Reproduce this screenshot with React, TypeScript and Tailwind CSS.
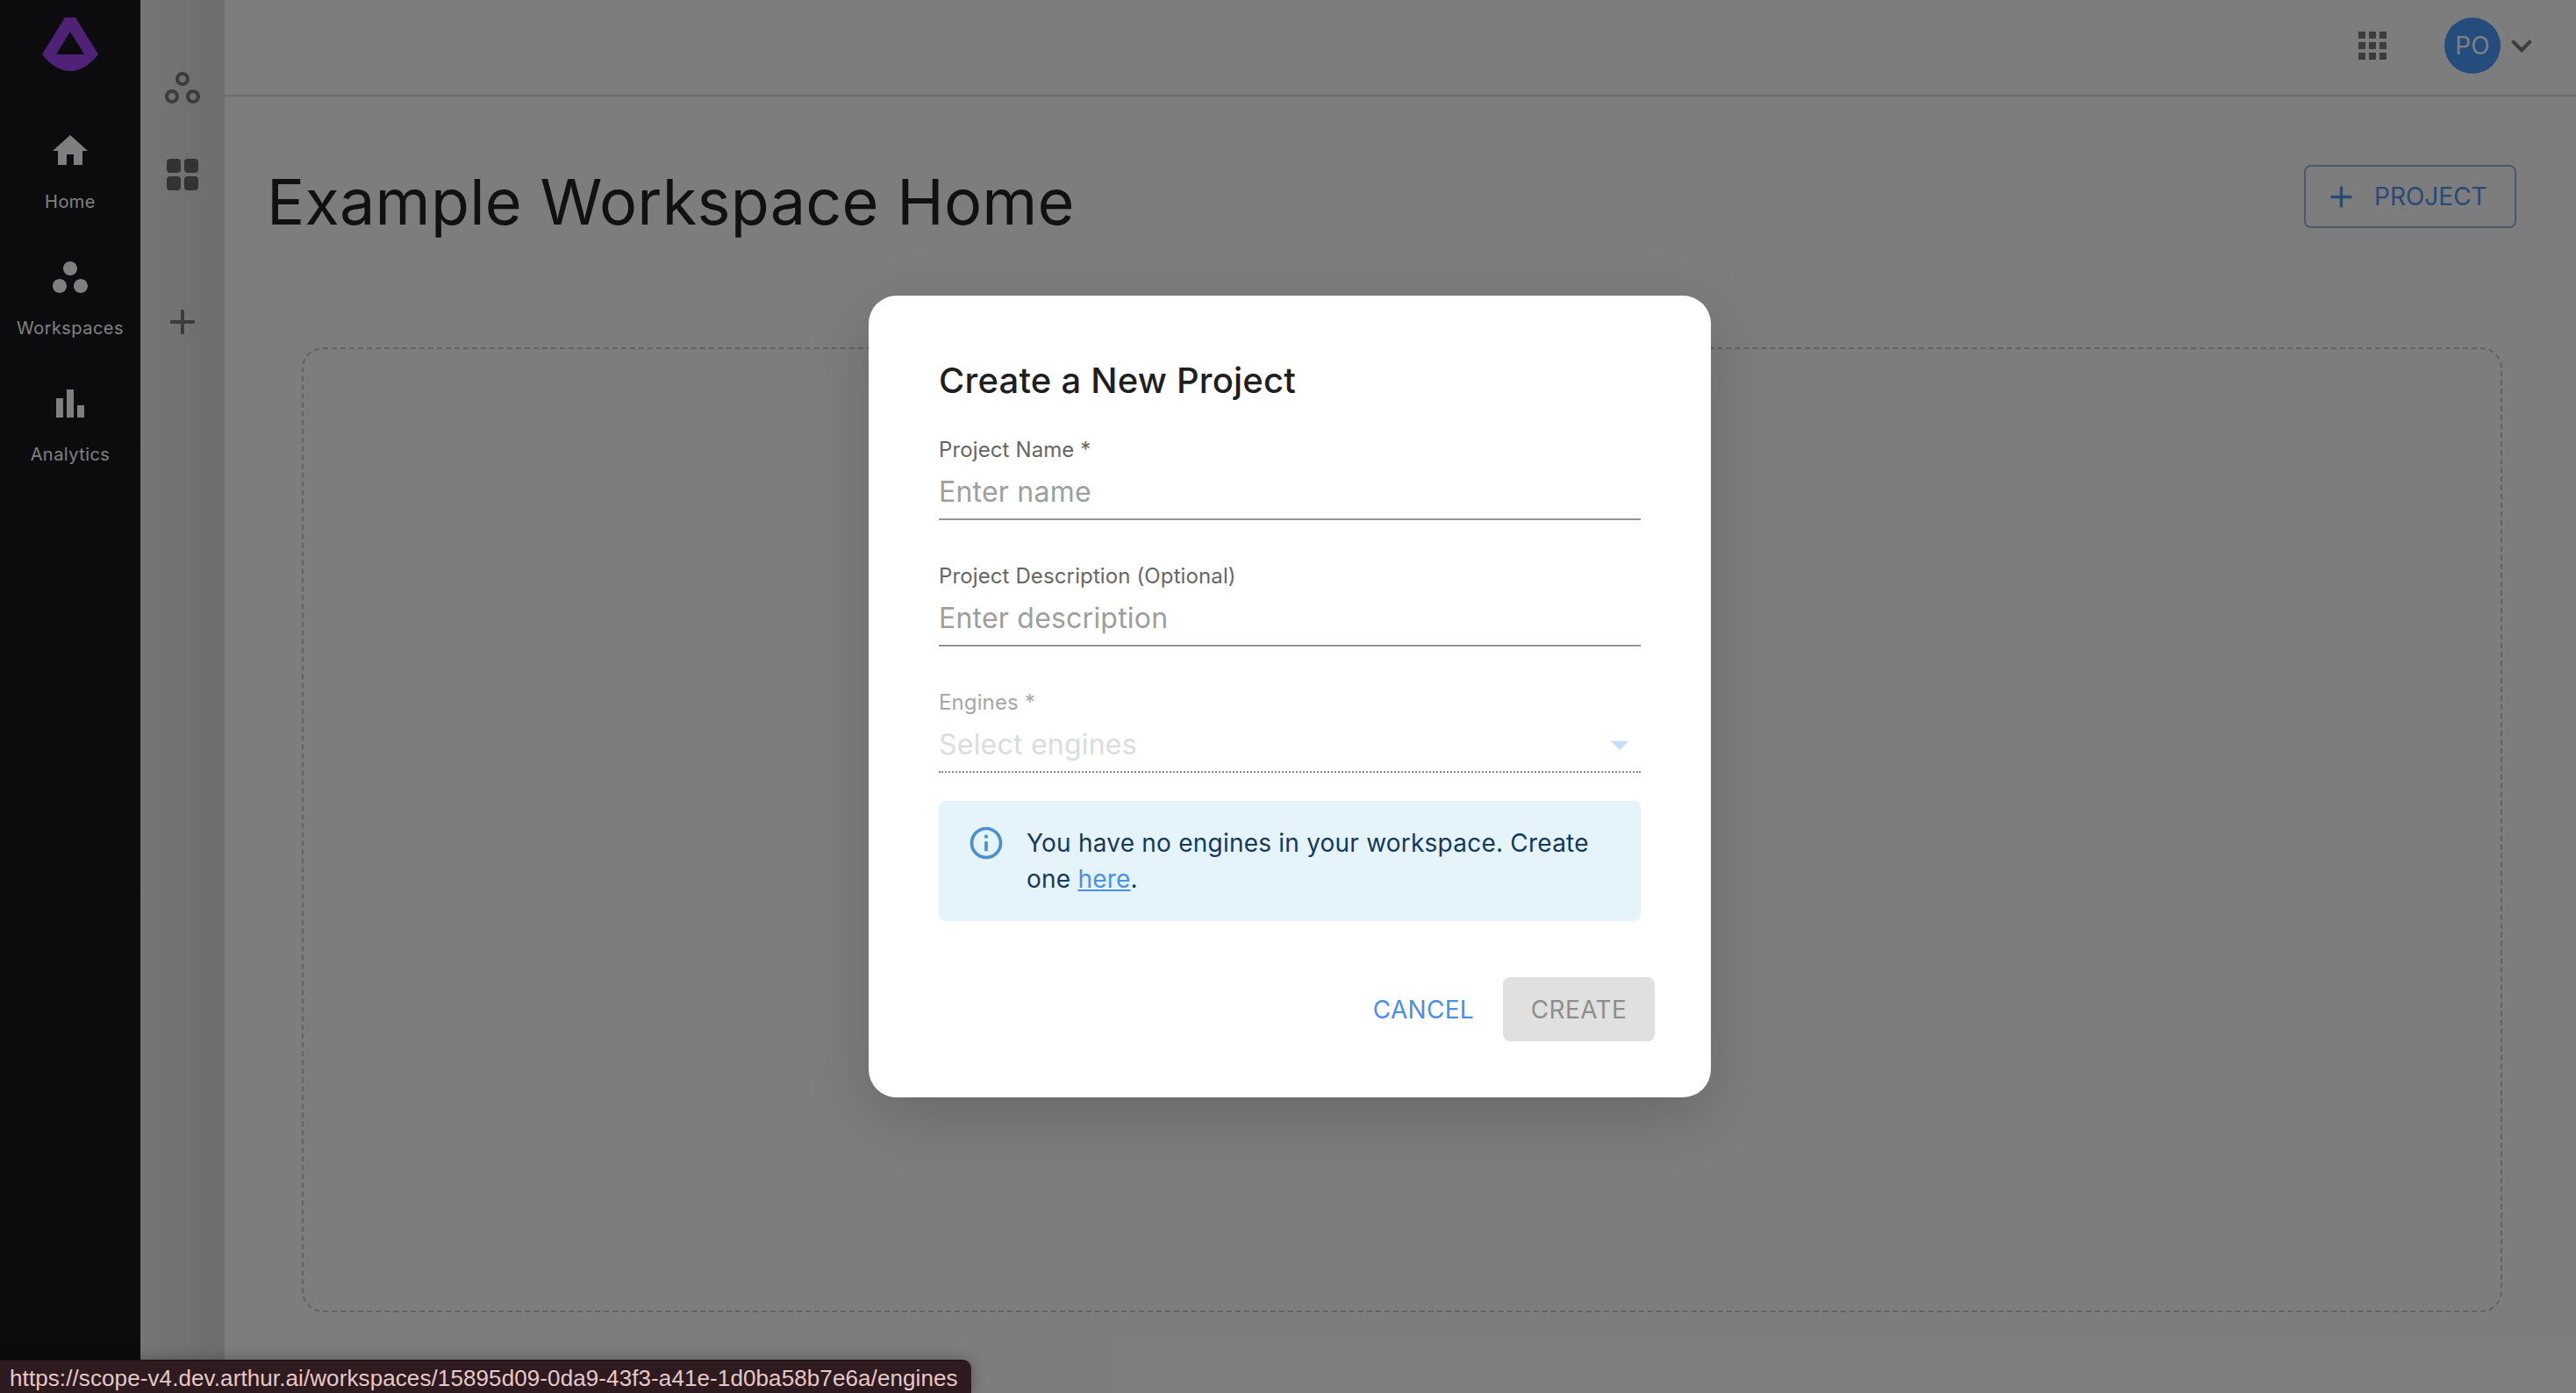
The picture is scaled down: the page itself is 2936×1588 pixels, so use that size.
import React from "react";

const Ico = ({ d, size = 48, className = "" }: { d: string; size?: number; className?: string }) => (
  <svg width={size} height={size} viewBox="0 0 24 24" className={"block shrink-0 fill-current " + className}>
    <path d={d} />
  </svg>
);

const HOME = "M10 20v-6h4v6h5v-8h3L12 3 2 12h3v8z";
const WORK = "M6 13c-2.2 0-4 1.8-4 4s1.8 4 4 4 4-1.8 4-4-1.8-4-4-4zm6-10C9.8 3 8 4.8 8 7s1.8 4 4 4 4-1.8 4-4-1.8-4-4-4zm6 10c-2.2 0-4 1.8-4 4s1.8 4 4 4 4-1.8 4-4-1.8-4-4-4z";
const BARS = "M4 9h4v11H4zm12 4h4v7h-4zm-6-9h4v16h-4z";
const WORK_O = "M6 15c1.1 0 2 .9 2 2s-.9 2-2 2-2-.9-2-2 .9-2 2-2m0-2c-2.2 0-4 1.8-4 4s1.8 4 4 4 4-1.8 4-4-1.8-4-4-4zm6-8c1.1 0 2 .9 2 2s-.9 2-2 2-2-.9-2-2 .9-2 2-2m0-2C9.8 3 8 4.8 8 7s1.8 4 4 4 4-1.8 4-4-1.8-4-4-4zm6 12c1.1 0 2 .9 2 2s-.9 2-2 2-2-.9-2-2 .9-2 2-2m0-2c-2.2 0-4 1.8-4 4s1.8 4 4 4 4-1.8 4-4-1.8-4-4-4z";
const ADD = "M19 13h-6v6h-2v-6H5v-2h6V5h2v6h6v2z";
const APPS = "M4 8h4V4H4v4zm6 12h4v-4h-4v4zm-6 0h4v-4H4v4zm0-6h4v-4H4v4zm6 0h4v-4h-4v4zm6-10v4h4V4h-4zm-6 4h4V4h-4v4zm6 6h4v-4h-4v4zm0 6h4v-4h-4v4z";
const DOWN = "M7.41 8.59 12 13.17l4.59-4.58L18 10l-6 6-6-6 1.41-1.41z";
const DROP = "M7 10l5 5 5-5z";
const INFO = "M11 7h2v2h-2zm0 4h2v6h-2zm1-9C6.48 2 2 6.48 2 12s4.48 10 10 10 10-4.48 10-10S17.52 2 12 2zm0 18c-4.41 0-8-3.59-8-8s3.59-8 8-8 8 3.59 8 8-3.59 8-8 8z";

const NavItem = ({ d, label }: { d: string; label: string }) => (
  <div className="flex h-[144px] flex-col items-center text-white">
    <Ico d={d} />
    <span className="mt-[20px] text-[20px] leading-[28px] tracking-[0.45px]">{label}</span>
  </div>
);

const Field = ({ label, placeholder }: { label: string; placeholder: string }) => (
  <div className="mb-[46px]">
    <div className="text-[24px] leading-[35px] tracking-[0.12px] text-[#666666]">{label}</div>
    <div className="mt-[9px] h-[54px] border-b-2 border-[#949494] text-[32px] leading-[44px] tracking-[0.22px] text-[#9e9e9e]">
      {placeholder}
    </div>
  </div>
);

export default function App() {
  return (
    <div className="relative flex h-[1588px] w-[2936px] overflow-hidden bg-[#fbfbfb] font-['Inter',sans-serif]">
      <aside className="flex w-[160px] shrink-0 flex-col items-center bg-[#18181c]">
        <svg width="160" height="148" viewBox="0 0 160 148" className="block shrink-0">
          <path
            fillRule="evenodd"
            fill="#9e42ee"
            d="M74 20H86L112 62Q97 81 80 81Q63 81 48 62ZM80 36L64 62H96Z"
          />
        </svg>
        <NavItem d={HOME} label="Home" />
        <NavItem d={WORK} label="Workspaces" />
        <NavItem d={BARS} label="Analytics" />
      </aside>

      <aside className="flex w-[96px] shrink-0 flex-col items-center bg-gradient-to-r from-[#ececec] to-[#dadada] pt-[76px] text-[#787878]">
        <Ico d={WORK_O} />
        <svg width="36" height="36" viewBox="0 0 36 36" className="mt-[57px] block shrink-0 fill-[#666666]">
          <rect x="0" y="0" width="16" height="16" rx="4" />
          <rect x="20" y="0" width="16" height="16" rx="4" />
          <rect x="0" y="20" width="16" height="16" rx="4" />
          <rect x="20" y="20" width="16" height="16" rx="4" />
        </svg>
        <Ico d={ADD} className="mt-[126px]" />
      </aside>

      <main className="flex min-w-0 flex-1 flex-col">
        <header className="flex h-[110px] shrink-0 items-start justify-end border-b-2 border-[#d8d8d8] pt-[20px] pr-[38px]">
          <Ico d={APPS} className="mt-[8px] mr-[58px] text-[#787878]" />
          <div className="flex h-[64px] w-[64px] items-center justify-center rounded-full bg-[#4898f8] text-[28px] text-white">
            PO
          </div>
          <Ico d={DOWN} className="mt-[8px] text-[#787878]" />
        </header>

        <div className="flex items-start justify-between pt-[78px] pr-[68px] pl-[48px]">
          <h1 className="mt-[2px] text-[72px] leading-[80px] font-normal tracking-[0.2px] text-[#222222]">
            Example Workspace Home
          </h1>
          <button className="flex h-[72px] w-[242px] items-center rounded-[8px] border-2 border-[#94b5e0] pl-[26px] text-[#4c96f0]">
            <Ico d={ADD} size={41} className="-ml-[6px]" />
            <span className="ml-[17px] text-[28px] tracking-[0px]">PROJECT</span>
          </button>
        </div>

        <div className="mt-[126px] mr-[84px] ml-[88px] h-[1100px] rounded-[24px] border-2 border-dashed border-[#c4c4c4]" />
      </main>

      <div className="absolute inset-0 flex items-center justify-center bg-black/50 pl-[4px]">
        <div className="h-[914px] w-[960px] rounded-[32px] bg-white px-[80px] pt-[67px] shadow-[0_22px_70px_rgba(0,0,0,0.16)]">
          <h2 className="mb-[31px] text-[40px] leading-[60px] font-medium tracking-[0.2px] text-[#1f1f1f]">
            Create a New Project
          </h2>
          <Field label="Project Name *" placeholder="Enter name" />
          <Field label="Project Description (Optional)" placeholder="Enter description" />
          <div className="mb-[32px]">
            <div className="text-[24px] leading-[35px] tracking-[0.12px] text-[#a6a6a6]">Engines *</div>
            <div className="mt-[9px] flex h-[54px] items-start justify-between border-b-2 border-dotted border-[#888888] text-[32px] leading-[44px] tracking-[0.22px] text-[#dcdcdc]">
              <span>Select engines</span>
              <Ico d={DROP} className="-mt-[2px] text-[#c2e0fb]" />
            </div>
          </div>
          <div className="flex h-[137px] gap-[24px] rounded-[8px] bg-[#e5f3fb] pt-[26px] pl-[32px] pr-[24px] text-[28px] tracking-[0.22px] text-[#14395a]">
            <Ico d={INFO} size={44} className="text-[#4a90d0]" />
            <div className="pt-[2px] leading-[41px]">
              You have no engines in your workspace. Create one{" "}
              <span className="text-[#4a90e8] underline">here</span>.
            </div>
          </div>
          <div className="-mr-[16px] mt-[64px] flex justify-end gap-[1px]">
            <button className="h-[73px] px-[32px] text-[28px] tracking-[0.3px] text-[#4a90e8]">CANCEL</button>
            <button className="h-[73px] w-[173px] rounded-[8px] bg-[#e0e0e0] text-[28px] tracking-[0.4px] text-[#8e8e8e]">
              CREATE
            </button>
          </div>
        </div>
      </div>

      <div className="absolute bottom-0 left-0 flex h-[38px] w-[1107px] items-center rounded-tr-[10px] border-t-2 border-[#241417] bg-[#2e1b1f] pt-[2px] pl-[11px] font-['Liberation_Sans',sans-serif] text-[26px] tracking-[0.1px] text-[#e6c8c8] shadow-[0_0_16px_rgba(0,0,0,0.3)]">
        https://scope-v4.dev.arthur.ai/workspaces/15895d09-0da9-43f3-a41e-1d0ba58b7e6a/engines
      </div>
    </div>
  );
}
